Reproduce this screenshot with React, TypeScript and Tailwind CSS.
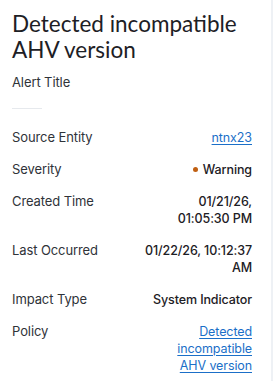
import React from "react";

const body = { fontFamily: "Inter, Lato, sans-serif" };

const Row = ({ label, children }: { label: string; children: React.ReactNode }) => (
  <div className="flex justify-between items-start" style={body}>
    <div className="text-[13px] leading-[17px] text-[#2f3339] font-normal tracking-[-0.1px]">{label}</div>
    <div className="text-[12.5px] leading-[17px] text-[#1d2025] font-medium text-right tracking-[-0.1px]">{children}</div>
  </div>
);

export default function App() {
  return (
    <div className="flex w-[273px] h-[381px] bg-white" style={{ fontFamily: "Lato, 'Open Sans', sans-serif" }}>
      <div className="flex-1 pl-3 pr-[19px] pt-[11px]">
        <h1 className="text-[22.5px] leading-[26px] text-[#1d2025] font-normal">Detected incompatible AHV version</h1>
        <div className="mt-[11px] text-[13px] leading-[17px] text-[#2f3339] font-normal tracking-[-0.1px]" style={body}>Alert Title</div>
        <div className="mt-[17px] w-[30px] h-px bg-[#e6e9ed]" />
        <div className="mt-[20px] flex flex-col gap-[15px]">
          <Row label="Source Entity">
            <a className="text-[#1b6fc8] underline underline-offset-2 font-normal">ntnx23</a>
          </Row>
          <Row label="Severity">
            <div className="flex items-center justify-end gap-[5px]">
              <span className="w-[5px] h-[5px] rounded-full bg-[#c05f12]" />
              <span>Warning</span>
            </div>
          </Row>
          <Row label="Created Time">
            <div>01/21/26,</div>
            <div>01:05:30 PM</div>
          </Row>
          <Row label="Last Occurred">
            <div>01/22/26, 10:12:37</div>
            <div>AM</div>
          </Row>
          <Row label="Impact Type">System Indicator</Row>
          <Row label="Policy">
            <a className="text-[#1b6fc8] underline underline-offset-2 font-normal">
              <div>Detected</div>
              <div>incompatible</div>
              <div>AHV version</div>
            </a>
          </Row>
        </div>
      </div>
      <div className="w-[2px] bg-[#eef1f5]" />
    </div>
  );
}
